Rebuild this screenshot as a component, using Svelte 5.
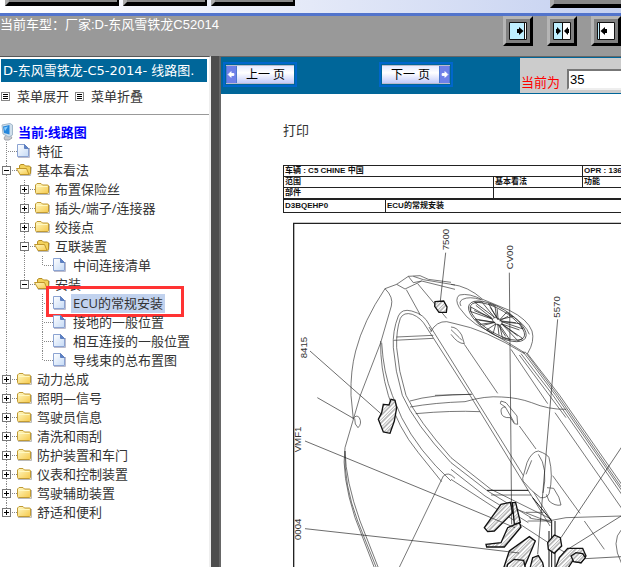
<script>
    // guides: one letter per 18px column before the icon
    // v = vertical line, n = nothing, t = tee, l = last corner, + / - = toggle, e = last open toggle, p = last closed toggle
    let rows = [
        { guides: "t", icon: "page", text: "特征" },
        { guides: "-", icon: "open", text: "基本看法" },
        { guides: "v+", icon: "folder", text: "布置保险丝" },
        { guides: "v+", icon: "folder", text: "插头/端子/连接器" },
        { guides: "v+", icon: "folder", text: "绞接点" },
        { guides: "v-", icon: "open", text: "互联装置" },
        { guides: "vvl", icon: "page", text: "中间连接清单" },
        { guides: "ve", icon: "open", text: "安装" },
        { guides: "vnt", icon: "page", text: "ECU的常规安装", marked: true },
        { guides: "vnt", icon: "page", text: "接地的一般位置" },
        { guides: "vnt", icon: "page", text: "相互连接的一般位置" },
        { guides: "vnl", icon: "page", text: "导线束的总布置图" },
        { guides: "+", icon: "folder", text: "动力总成" },
        { guides: "+", icon: "folder", text: "照明—信号" },
        { guides: "+", icon: "folder", text: "驾驶员信息" },
        { guides: "+", icon: "folder", text: "清洗和雨刮" },
        { guides: "+", icon: "folder", text: "防护装置和车门" },
        { guides: "+", icon: "folder", text: "仪表和控制装置" },
        { guides: "+", icon: "folder", text: "驾驶辅助装置" },
        { guides: "p", icon: "folder", text: "舒适和便利" }
    ];

    let selected = $state("ECU的常规安装");
    let pageNumber = $state("35");
</script>

{#snippet guide(kind)}
    <svg class="guide" width="18" height="19" viewBox="0 0 18 19" shape-rendering="crispEdges">
        {#if kind != "n"}
            <path class="dots" d={"lpe".includes(kind) ? "M6.5 0V9" : "M6.5 0V19"} />
        {/if}
        {#if !"nv".includes(kind)}
            <path class="dots" d="M8 9.5H18" />
        {/if}
        {#if "+-ep".includes(kind)}
            <rect x="2.5" y="5.5" width="8" height="8" fill="#fff" stroke="#777" />
            <path d="M4 9.5H9" stroke="#000" />
        {/if}
        {#if "+p".includes(kind)}
            <path d="M6.5 7V12" stroke="#000" />
        {/if}
    </svg>
{/snippet}

{#snippet icon(kind)}
    <svg class="icon" width="18" height="18" viewBox="0 0 18 18">
        {#if kind == "page"}
            <path d="M2 15.5H13.5V6" fill="none" stroke="#bbc" />
            <path d="M1.5 2.5H8.5L12.5 6.5V14.5H1.5Z" fill="url(#paper)" stroke="#8ba3d2" />
            <path d="M8.5 2.5V6.5H12.5Z" fill="#5b80c8" stroke="#5f80be" />
        {:else if kind == "folder"}
            <path d="M2 14.5H15.5V6" fill="none" stroke="#bbb" />
            <path d="M1.5 5L3 3.5H7L8.5 5H13.5Q14.5 5 14.5 6V12.5Q14.5 13.5 13.5 13.5H2.5Q1.5 13.5 1.5 12.5Z" fill="url(#gold)" stroke="#c09a34" />
            <path d="M2.5 6.5H13.5" stroke="#fff8c0" />
        {:else}
            <path d="M4 14.5H14.5L15.5 6" fill="none" stroke="#bbb" />
            <path d="M3.5 6V4.5L5 3.5H8L9.5 5H13.5L14.5 6V12.5L13 13.5H4Z" fill="#f3d25c" stroke="#b58d24" />
            <path d="M.5 7.5H10.5L13 13.5H4Z" fill="url(#gold)" stroke="#c0962a" />
        {/if}
    </svg>
{/snippet}

<svg class="defs" width="0" height="0" aria-hidden="true">
    <defs>
        <linearGradient id="gold" x1="0" y1="0" x2="1" y2="1">
            <stop offset="0" stop-color="#fffac8" />
            <stop offset="1" stop-color="#f6c94a" />
        </linearGradient>
        <linearGradient id="paper" x1="0" y1="0" x2="1" y2="1">
            <stop offset="0" stop-color="#fff" />
            <stop offset="1" stop-color="#c5daf6" />
        </linearGradient>
        <pattern id="hatch" width="16" height="16" patternUnits="userSpaceOnUse" patternTransform="rotate(45)">
            <rect width="16" height="16" fill="#fff" />
            <path d="M0 0V16M8 0V16" stroke="#444" stroke-width="2" />
        </pattern>
    </defs>
</svg>

<div class="app">
    <div class="toolbar">
        <button class="tool wide" aria-label="tool 1"></button>
        <button class="tool" aria-label="tool 2"></button>
        <button class="tool" aria-label="tool 3"></button>
        <button class="tool last" aria-label="tool 4"></button>
    </div>

    <header>
        <span class="model">当前车型：厂家:D-东风雪铁龙C52014</span>
        <div class="views">
            <button aria-label="show left">
                <svg width="18" height="18" viewBox="0 0 18 18">
                    <path d="M.5 .5H17.5V17.5H.5Z" fill="#fff" stroke="#111" />
                    <path d="M1 1H15V17H1Z" fill="#bfefff" />
                    <path d="M15.5 1V17" stroke="#111" />
                    <path d="M8 7H10V5L14.5 9L10 13V11H8Z" />
                </svg>
            </button>
            <button aria-label="split view">
                <svg width="18" height="18" viewBox="0 0 18 18">
                    <path d="M.5 .5H17.5V17.5H.5Z" fill="#fff" stroke="#111" />
                    <path d="M1 1H9V17H1Z" fill="#bfefff" />
                    <path d="M9.5 1V17" stroke="#111" />
                    <path d="M3 7H4V5L8 9L4 13V11H3ZM16 7H15V5L11 9L15 13V11H16Z" />
                </svg>
            </button>
            <button aria-label="show right">
                <svg width="18" height="18" viewBox="0 0 18 18">
                    <path d="M.5 .5H17.5V17.5H.5Z" fill="#fff" stroke="#111" />
                    <path d="M1 1H2V17H1Z" fill="#bfefff" />
                    <path d="M2.5 1V17" stroke="#111" />
                    <path d="M10 7H8V5L3.5 9L8 13V11H10Z" />
                </svg>
            </button>
        </div>
    </header>

    <div class="frames">
        <nav>
            <h1>D-东风雪铁龙-C5-2014- 线路图.</h1>
            <div class="fold">
                <a href="#open"><i class="list"></i>菜单展开</a>
                <a href="#close"><i class="list"></i>菜单折叠</a>
            </div>

            <div class="tree">
                <div class="root">
                    <svg width="14" height="18" viewBox="0 0 14 18">
                        <path d="M4 15L6 12H10L12 15L9 17H5Z" fill="#c9cbd0" stroke="#a0a4ad" />
                        <path d="M2 2L10 .5L12.5 2V12L9 14L3 11Z" fill="#cfdfec" stroke="#a4b8ca" />
                        <path d="M3 3.5L9.5 2V11.5L4 10Z" fill="#2687dc" />
                        <path d="M4 4.5L8 3.5L5 8Z" fill="#8bd0ff" />
                    </svg>
                    <b>当前:线路图</b>
                </div>
                {#each rows as row}
                    <div class="row">
                        {#each row.guides as g}
                            {@render guide(g)}
                        {/each}
                        {@render icon(row.icon)}
                        <a href="#doc" class:selected={selected == row.text} onclick={() => (selected = row.text)}>{row.text}</a>
                        {#if row.marked}
                            <div class="mark"></div>
                        {/if}
                    </div>
                {/each}
            </div>
        </nav>

        <main>
            <div class="pager">
                <div>
                    <a class="step" href="#prev">
                        <svg width="11" height="18" viewBox="0 0 11 18"><path d="M0 0H11V18H0Z" fill="#6f80e8" /><path d="M2 9L5 6V8H8V10H5V12Z" fill="#fff" stroke="#fff" /></svg>
                        <span>上一 页</span>
                    </a>
                </div>
                <div>
                    <a class="step" href="#next">
                        <span>下一 页</span>
                        <svg width="11" height="18" viewBox="0 0 11 18"><path d="M0 0H11V18H0Z" fill="#6f80e8" /><path d="M9 9L6 6V8H3V10H6V12Z" fill="#fff" stroke="#fff" /></svg>
                    </a>
                </div>
                <div class="current">
                    <label for="page">当前为</label>
                    <input id="page" type="text" bind:value={pageNumber}>
                </div>
            </div>

            <div class="sheet">
                <a class="print" href="#print">打印</a>

                <table>
                    <colgroup><col class="c1"><col class="c2"><col class="c3"><col></colgroup>
                    <tbody>
                        <tr><td colspan="3">车辆 : C5 CHINE 中国</td><td>OPR : 136</td></tr>
                        <tr><td colspan="2">范围</td><td>基本看法</td><td>功能</td></tr>
                        <tr><td colspan="2">部件</td><td colspan="2"></td></tr>
                        <tr class="ref"><td>D3BQEHP0</td><td colspan="3">ECU的常规安装</td></tr>
                    </tbody>
                </table>

                <svg class="drawing" width="329" height="346" viewBox="21 3 987 1038">
                    <path class="frame" d="M1010 7H26V1045" />

                    <!-- body, rear left -->
                    <path d="M300 203Q235 300 212 390Q196 450 198 523L205 595M300 203Q326 228 319 255L287 365L226 523L205 595L180 680Q168 760 210 890L270 1045M180 690Q182 780 225 900L282 1045M180 690Q176 790 218 900L276 1045" />
                    <path d="M300 203L335 190L370 166L405 164L430 175L498 184M335 190L360 204L400 185L410 180L510 205M370 166L385 185L410 180M385 166L415 176L510 192M398 188L485 292M364 206L406 282" />
                    <path d="M287 360Q285 440 310 523Q338 620 400 695L470 782M290 365Q295 455 322 523L350 590Q400 690 498 780M325 380Q322 330 340 285Q350 262 380 270Q418 280 432 310L565 523L800 900M335 380Q333 330 346 292Q356 272 382 280Q408 290 424 318L555 523L795 915" />
                    <path d="M325 380Q330 450 352 523Q390 610 498 725L608 810L738 890M335 380Q340 450 363 523Q400 600 498 710L618 805L800 895M498 745L600 825L730 905M498 775L790 965L850 1000" />
                    <path d="M334 348L445 343M326 358L445 352M437 332Q455 300 485 302L510 308Q600 325 718 398M440 332L432 318M375 540Q440 520 560 520M375 558Q450 545 540 542Q600 524 650 528Q700 530 740 545Q790 566 844 565M392 578Q500 568 585 572M450 523L560 520" />
                    <path d="M475 765L340 1045M475 765Q490 750 510 772M205 592Q214 580 223 590Q232 608 219 620Q208 612 209 592" />

                    <!-- front wheel -->
                    <g transform="translate(498 0)">
                        <path d="M0 190Q50 195 95 235L175 268Q230 295 243 330Q252 360 230 397M95 237Q55 215 25 222Q10 235 25 260Q45 290 75 310Q140 345 222 396M90 236Q55 225 35 235Q22 242 30 255M175 280Q225 310 235 340" />
                        <g class="wheel" transform="translate(139 301) rotate(31)">
                            <ellipse rx="98" ry="40" />
                            <ellipse rx="93" ry="35" />
                            <ellipse rx="16" ry="9" />
                            <path d="M-14-6L-88-14L-70-26ZM-8-9L-50-32L-30-36ZM4-9L10-38L32-36ZM12-6L62-29L78-20ZM16 0L92 5L82 18ZM12 6L60 28L38 34ZM0 9L8 38L-14 38ZM-8 8L-40 35L-60 28ZM-16 2L-84 16L-90 4Z" />
                            <path d="M-80-8L-20 0L-76 8M-40-25L0-5L-20-32M20-30L5-5L50-25M70-12L15 0L75 6M45 26L5 6L25 32M-30 32L-4 6L-50 26" />
                        </g>
                        <path d="M0 318Q18 318 32 342L40 368Q20 368 0 340M0 326L25 350L33 358" />
                        <path d="M40 370L140 517M180 385L290 548M205 402L345 590M222 392L320 523L512 800M216 392L314 523L512 808M228 396L326 523L512 790M210 398L306 523L512 820M312 575L512 862" />
                    </g>

                    <!-- front right -->
                    <g transform="translate(498 510)">
                        <path d="M150 30L165 35L198 75L200 100L190 98L178 80Q150 82 150 60Q150 48 163 48L148 38ZM163 48L190 95M205 105L255 174M305 254L387 367M400 390L460 475" />
                        <path fill="#fff" d="M215 262L228 215Q242 182 262 180Q290 190 294 200Q308 255 294 308Q288 322 268 320Q240 300 216 270Z" />
                        <path d="M225 250L242 208M262 190Q292 230 276 306M288 290L308 292Q328 320 330 342Q312 346 294 330L286 310" />
                        <path class="strong" d="M108 298H232M302 390V540M294 420V540M312 390V540M245 320L302 390" />
                        <path d="M120 312H240M225 364H278M235 380Q245 386 302 388L345 380L512 375M185 350L300 395M512 415Q478 450 512 518M230 390H302" />
                        <g class="part">
                            <path d="M100 410L150 340L178 334L185 365L130 420L110 422Z" />
                            <path d="M105 460L150 455L170 410L205 395L210 408L160 468H107Z" />
                            <path d="M184 335H194L208 394L190 400Z" />
                            <path d="M155 540L175 480L235 437L253 450L215 540Z" />
                            <path d="M235 540L245 500L262 494L275 515L280 540Z" />
                            <path d="M170 520L190 505L218 508L225 540H165Z" />
                            <path d="M310 540L325 500L350 472H395L405 495L390 515L365 510L345 540Z" />
                            <path d="M290 455L310 432L328 440L332 465L310 487L292 475Z" />
                            <path d="M360 495L375 485L395 488L403 500L390 515L368 512Z" />
                        </g>
                    </g>

                    <g class="part">
                        <path d="M450 242L476 240L486 258L484 274H462L449 256Z" />
                        <path d="M295 550L312 552L318 535L330 538L335 560L328 600L315 637L295 633L280 595L290 575Z" />
                    </g>

                    <!-- leaders -->
                    <path class="leader" d="M482 95L466 240M75 390L290 580M97 530L205 592M60 660L510 845L690 920M60 923L510 973L702 996M673 155L680 910M818 295L798 523L758 1000M1010 678L828 950M1010 884L848 985M900 1013L1010 1007" />
                    <g class="tags">
                        <text transform="translate(491 88) rotate(-90)">7500</text>
                        <text transform="translate(66 412) rotate(-90)">8415</text>
                        <text transform="translate(47 694) rotate(-90)">VMF1</text>
                        <text transform="translate(47 957) rotate(-90)">0004</text>
                        <text transform="translate(683 145) rotate(-90)">CV00</text>
                        <text transform="translate(826 290) rotate(-90)">5570</text>
                    </g>
                </svg>
            </div>
        </main>
    </div>
</div>

<style>
:global(body){
    margin: 0;
    overflow: hidden;
}

.app{
    display: flex;
    flex-direction: column;
    height: 100vh;
    overflow: hidden;
    font-family: "Open Sans", "Noto Sans CJK SC", sans-serif;
    font-size: 13px;
    color: #333;
    background: #999;
}

.app *{
    box-sizing: border-box;
}

a{
    color: inherit;
    text-decoration: none;
}

.defs{
    position: absolute;
}

.toolbar{
    display: flex;
    flex: none;
    align-items: flex-start;
    gap: 4px;
    height: 16px;
    padding-left: 5px;
    background: linear-gradient(90deg, #fff, #e4e9f8 50%, #c4d0f0);
    border-bottom: 3px solid #5274cc;
}

.tool{
    width: 84px;
    height: 6px;
    padding: 0;
    background: #888;
    border: solid #000;
    border-width: 0 2px 4px 4px;
    border-left-color: #aaa;
}

.tool.wide{
    width: 114px;
}

.tool.last{
    width: 71px;
    height: 8px;
    margin-left: auto;
    border-right: 0;
}

header{
    display: flex;
    flex: none;
    justify-content: space-between;
    height: 40px;
    background: #999;
    color: #fff;
}

.model{
    line-height: 17px;
    font-family: "Liberation Sans", "Noto Sans CJK SC", sans-serif;
    font-size: 13px;
    white-space: nowrap;
}

.views{
    display: flex;
    gap: 14px;
}

.views button{
    width: 30px;
    height: 30px;
    padding: 3px;
    background: #808080;
    border: 3px solid;
    border-color: #b5b5b5 #000 #000 #b5b5b5;
}

.views svg{
    display: block;
}

.frames{
    display: flex;
    flex: 1;
    min-height: 0;
}

nav{
    flex: none;
    width: 211px;
    background: #fff;
    border-top: 1px solid #555;
    border-right: 2px solid #eee;
}

h1{
    margin: 2px 2px 0 1px;
    padding-left: 2px;
    background: #069;
    color: #fff;
    font-family: "DejaVu Sans", "Noto Sans CJK SC", sans-serif;
    font-size: 13px;
    font-weight: normal;
    line-height: 23px;
    white-space: nowrap;
}

.fold{
    display: flex;
    align-items: flex-start;
    gap: 6px;
    height: 33px;
    padding: 5px 0 0 1px;
    line-height: 18px;
    border-bottom: 1px solid #999;
}

.fold a{
    display: flex;
    align-items: center;
    gap: 7px;
}

.list{
    width: 9px;
    height: 9px;
    border: 1px solid #888;
    background: linear-gradient(#000, #000) 1px 1px / 5px 1px no-repeat, linear-gradient(#000, #000) 1px 3px / 5px 1px no-repeat, linear-gradient(#000, #000) 1px 5px / 5px 1px no-repeat;
}

.tree{
    padding-top: 8px;
    line-height: 19px;
    white-space: nowrap;
}

.root{
    display: flex;
    gap: 4px;
    height: 19px;
    color: #00f;
}

.row{
    position: relative;
    display: flex;
    height: 19px;
}

.guide{
    flex: none;
}

.dots{
    stroke: #888;
    stroke-dasharray: 1 1;
}

.icon{
    flex: none;
    margin-left: -2px;
}

.row a{
    padding: 0 2px;
    margin-left: 1px;
}

.row a.selected{
    background: #c1d2ee;
}

.mark{
    position: absolute;
    left: 46px;
    top: -8px;
    width: 138px;
    height: 31px;
    border: 3px solid #ff3333;
    pointer-events: none;
}

main{
    flex: 1;
    min-width: 0;
    overflow: hidden;
    background: #fff;
    border-left: 8px solid #4d4d4d;
    box-shadow: inset 2px 1px #666;
    padding: 1px 0 0 2px;
}

.pager{
    display: grid;
    grid-template-columns: 156px 143px 1fr;
    height: 37px;
    background: #069;
}

.pager > div{
    padding: 5px 0 0 2px;
}

.step{
    display: flex;
    width: 74px;
    height: 25px;
    padding: 1px;
    border: 2px solid #06c;
    color: #000;
}

.step svg, .step span{
    height: 19px;
    border: solid #bbc;
    border-width: 1px 0;
}

.step svg{
    flex: none;
}

.step span{
    flex: 1;
    background: linear-gradient(#e6eaff, #fff 40%, #c4ccfa);
    font-size: 12px;
    text-align: center;
    line-height: 17px;
    white-space: pre;
}

.pager > .current{
    display: flex;
    align-items: flex-start;
    gap: 7px;
    height: 35px;
    margin-top: 1px;
    padding: 11px 2px 0 1px;
    background: #ccc;
    color: #f00;
    line-height: 26px;
    white-space: nowrap;
}

.current input{
    flex: 1;
    min-width: 0;
    height: 21px;
    padding: 0 1px;
    border: 2px solid;
    border-color: #777 #eee #eee #777;
    font: 13px "Liberation Sans", sans-serif;
    color: #000;
    background: #fff;
}

.sheet{
    padding: 26px 0 0 62px;
}

.print{
    display: block;
    line-height: 20px;
    margin-bottom: 25px;
}

table{
    width: calc(100% + 60px);
    table-layout: fixed;
    border-collapse: collapse;
    font: bold 8px "Liberation Sans", "Noto Sans CJK SC", sans-serif;
    color: #111;
}

.c1{
    width: 102px;
}

.c2{
    width: 108px;
}

.c3{
    width: 89px;
}

td{
    height: 11px;
    padding: 0 1px;
    border: 1px solid #222;
    line-height: 10px;
    white-space: nowrap;
}

.ref td{
    height: 13px;
    border-top: 2px solid #222;
}

.drawing{
    display: block;
    margin: 9px 0 0 9px;
    fill: none;
    stroke: #333;
    stroke-width: 2;
}

.frame{
    stroke: #222;
    stroke-width: 4;
}

.wheel{
    stroke: #222;
    stroke-width: 2;
}

.strong{
    stroke: #111;
    stroke-width: 3;
}

.part{
    fill: url(#hatch);
    stroke: #111;
    stroke-width: 4;
}

.leader{
    stroke: #222;
    stroke-width: 2;
}

.tags{
    fill: #333;
    stroke: none;
    font: 29px "Liberation Sans", sans-serif;
}
</style>
